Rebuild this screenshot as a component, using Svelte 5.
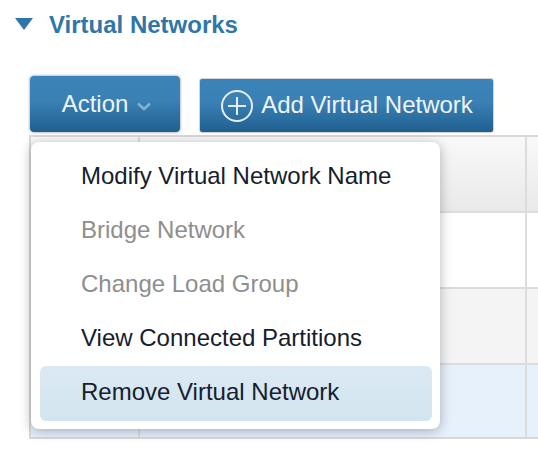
<script>
  const items = [
    { label: 'Modify Virtual Network Name' },
    { label: 'Bridge Network', disabled: true },
    { label: 'Change Load Group', disabled: true },
    { label: 'View Connected Partitions' },
    { label: 'Remove Virtual Network', active: true }
  ];
  const rows = ['head', 'odd', 'even', 'sel'];
</script>

<div class="page">
  <h2 class="title">
    <svg class="tri" width="18" height="12" viewBox="0 0 18 12"><path d="M0 0H18L9 12Z" fill="#2f77a8" /></svg>
    <span>Virtual Networks</span>
  </h2>

  <div class="toolbar">
    <button class="btn action"><span>Action</span>
      <svg width="16" height="9" viewBox="0 0 16 9"><path d="M2 1.5L8 7L14 1.5" fill="none" stroke="#86b3d0" stroke-width="2.4" /></svg>
    </button>
    <button class="btn add">
      <svg width="34" height="34" viewBox="0 0 34 34"><circle cx="17" cy="17" r="15" fill="none" stroke="#e6eef4" stroke-width="2" /><path d="M17 8V26M8 17H26" stroke="#e6eef4" stroke-width="2" /></svg>
      <span class="addlabel">Add Virtual Network</span>
    </button>
  </div>

  <div class="tablewrap">
    <div class="table">
      {#each rows as r}
        <div class="row {r}"><div class="c1"></div><div class="c2"></div><div class="c3"></div></div>
      {/each}
    </div>
    <ul class="menu">
      {#each items as it}
        <li class:disabled={it.disabled} class:active={it.active}>{it.label}</li>
      {/each}
    </ul>
  </div>
</div>

<style>
  :global(body) { margin: 0; background: #fff; overflow: hidden; }
  .page { width: 538px; height: 452px; font-family: "Liberation Sans", Arial, sans-serif; overflow: hidden; }
  .title { margin: 0; padding: 12px 0 0 15px; height: 75px; box-sizing: border-box; display: flex; align-items: flex-start; gap: 16px; font-size: 24px; line-height: 26px; font-weight: bold; color: #2f77a8; }
  .tri { margin-top: 6px; }
  .toolbar { display: flex; align-items: flex-start; gap: 18px; padding-left: 29px; height: 60px; box-sizing: border-box; }
  .btn { display: flex; align-items: center; justify-content: center; color: #eef4f8; font-family: inherit; font-size: 24px; box-sizing: border-box; padding: 0; border: 1px solid #d0d4d8; background: linear-gradient(#3a84b9 0%, #3a80b4 45%, #1f5f8f 100%); }
  .action { width: 152px; height: 58px; border-radius: 5px; gap: 8px; padding-left: 4px; box-shadow: 0 0 2px #b8bec4; }
  .action svg { margin-top: 4px; }
  .add { width: 295px; height: 55px; margin-top: 3px; border-radius: 3px; gap: 7px; }
  .addlabel { margin-top: -2px; }
  .tablewrap { position: relative; }
  .table { margin-left: 29px; border: 2px solid #d8d8d8; border-right: 0; }
  .row { display: flex; height: 76px; border-bottom: 2px solid #dcdcdc; box-sizing: border-box; }
  .row:last-child { border-bottom: 0; height: 72px; }
  .c1 { width: 107px; border-right: 2px solid #dcdcdc; }
  .c2 { width: 385px; border-right: 2px solid #dcdcdc; }
  .c3 { flex: 1; }
  .head { background: linear-gradient(#f9f9f9, #e9e9e9); }
  .odd { background: #fff; }
  .even { background: #f4f4f4; }
  .sel { background: #e6f1fc; }
  .menu { position: absolute; left: 31px; top: 7px; width: 409px; height: 287px; margin: 0; padding: 7px 8px 8px 9px; box-sizing: border-box; list-style: none; background: #fff; border-radius: 8px; box-shadow: 0 2px 12px rgba(60,70,85,.4); font-size: 24px; color: #16202c; }
  .menu li { height: 54px; line-height: 54px; padding-left: 41px; border-radius: 6px; box-sizing: border-box; white-space: nowrap; }
  .menu .disabled { color: #8e8e8e; }
  .menu .active { height: 55px; margin-top: 1px; line-height: 52px; background: linear-gradient(#dbe9f3, #d3e5f0); }
</style>
